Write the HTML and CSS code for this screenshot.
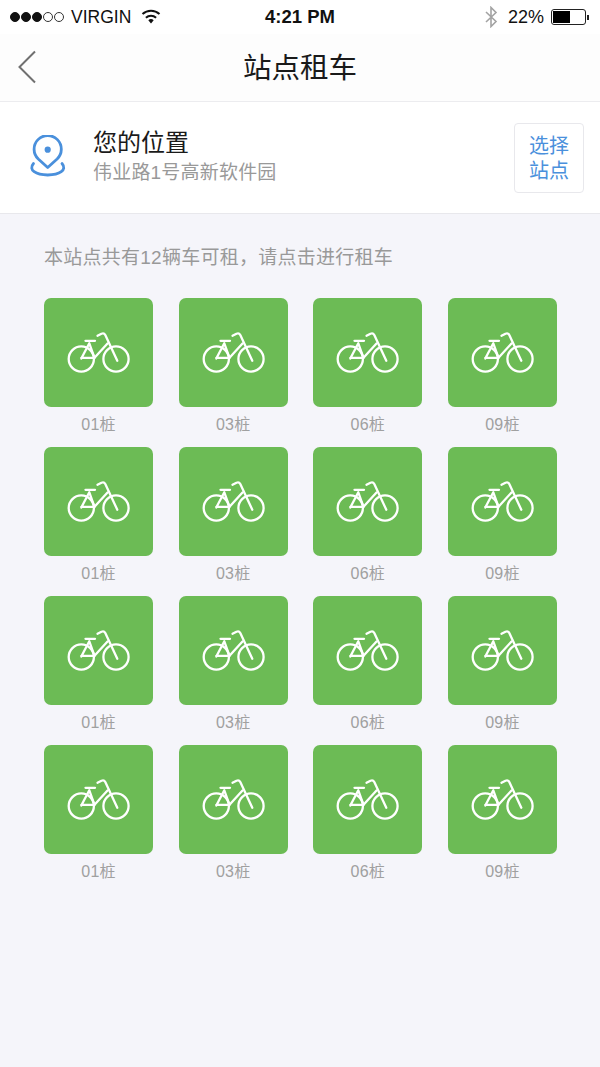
FILE: index.html
```html
<!DOCTYPE html>
<html lang="zh-CN">
<head>
    <meta charset="UTF-8">
    <meta name="viewport" content="width=device-width, initial-scale=1.0">
    <title>站点租车</title>
    <link rel="stylesheet" href="styles.css">
</head>
<body>
<svg class="defs" width="0" height="0">
    <symbol id="bike" viewBox="0 0 64 44">
        <g fill="none" stroke="#fff" stroke-width="2.300" stroke-linecap="round" stroke-linejoin="round">
            <circle cx="15.300" cy="28" r="12.600"/>
            <circle cx="50" cy="28" r="12.600"/>
            <path d="M31.500 4.800 35.500 2.700C37 2 38.500 2.500 39.300 4L51.300 29.700"/>
            <path d="M15.300 27.500 23.300 12.300 28.500 26.800H15.300"/>
            <path d="M28.500 26.800 41.500 12.500"/>
            <path d="M19.500 9.800H29"/>
        </g>
    </symbol>
</svg>

<div class="statusbar">
    <div class="status-left">
        <span class="signal"><i class="on"></i><i class="on"></i><i class="on"></i><i></i><i></i></span>
        <span class="carrier">VIRGIN</span>
        <svg class="wifi" width="20" height="15" viewBox="0 0 20 15">
            <path d="M10 14.500 7.300 11.300a4 4 0 0 1 5.400 0z" fill="#111"/>
            <path d="M4.900 8.700a7.500 7.500 0 0 1 10.200 0M1.500 5a12.600 12.600 0 0 1 17 0" fill="none" stroke="#111" stroke-width="2"/>
        </svg>
    </div>
    <div class="time">4:21 PM</div>
    <div class="status-right">
        <svg class="bt" width="14" height="22" viewBox="0 0 14 22">
            <path d="M2 6 12 15.500 7 20.500V1.500L12 6.500 2 16" fill="none" stroke="#a3a3a3" stroke-width="1.600"/>
        </svg>
        <span class="battery-text">22%</span>
        <span class="battery"><span class="battery-level"></span></span>
        <span class="battery-tip"></span>
    </div>
</div>

<div class="navbar">
    <svg class="back" width="20" height="34" viewBox="0 0 20 34">
        <path d="M18 1.500 2.500 17 18 32.500" fill="none" stroke="#707070" stroke-width="2"/>
    </svg>
    <h1>站点租车</h1>
</div>

<div class="location">
    <svg class="pin" width="38" height="42" viewBox="0 0 38 42">
        <g fill="none" stroke="#4a90dc" stroke-width="2.800" stroke-linecap="round" stroke-linejoin="round">
            <path d="M18.700 32.500 9.300 24A13.600 13.600 0 1 1 28.100 24Z"/>
            <path d="M4.500 28.500C-1 35 7 40 18.700 40S38.500 35 33 28.500"/>
        </g>
        <circle cx="18.700" cy="14.700" r="3.100" fill="#4a90dc"/>
    </svg>
    <div class="location-info">
        <div class="location-title">您的位置</div>
        <div class="location-addr">伟业路1号高新软件园</div>
    </div>
    <div class="pick-btn">选择<br>站点</div>
</div>

<div class="content">
    <p class="hint">本站点共有12辆车可租，请点击进行租车</p>
    <div class="grid">
        <div class="item"><div class="tile"><svg class="bike"><use href="#bike"/></svg></div><span>01桩</span></div>
        <div class="item"><div class="tile"><svg class="bike"><use href="#bike"/></svg></div><span>03桩</span></div>
        <div class="item"><div class="tile"><svg class="bike"><use href="#bike"/></svg></div><span>06桩</span></div>
        <div class="item"><div class="tile"><svg class="bike"><use href="#bike"/></svg></div><span>09桩</span></div>
        <div class="item"><div class="tile"><svg class="bike"><use href="#bike"/></svg></div><span>01桩</span></div>
        <div class="item"><div class="tile"><svg class="bike"><use href="#bike"/></svg></div><span>03桩</span></div>
        <div class="item"><div class="tile"><svg class="bike"><use href="#bike"/></svg></div><span>06桩</span></div>
        <div class="item"><div class="tile"><svg class="bike"><use href="#bike"/></svg></div><span>09桩</span></div>
        <div class="item"><div class="tile"><svg class="bike"><use href="#bike"/></svg></div><span>01桩</span></div>
        <div class="item"><div class="tile"><svg class="bike"><use href="#bike"/></svg></div><span>03桩</span></div>
        <div class="item"><div class="tile"><svg class="bike"><use href="#bike"/></svg></div><span>06桩</span></div>
        <div class="item"><div class="tile"><svg class="bike"><use href="#bike"/></svg></div><span>09桩</span></div>
        <div class="item"><div class="tile"><svg class="bike"><use href="#bike"/></svg></div><span>01桩</span></div>
        <div class="item"><div class="tile"><svg class="bike"><use href="#bike"/></svg></div><span>03桩</span></div>
        <div class="item"><div class="tile"><svg class="bike"><use href="#bike"/></svg></div><span>06桩</span></div>
        <div class="item"><div class="tile"><svg class="bike"><use href="#bike"/></svg></div><span>09桩</span></div>
    </div>
</div>
</body>
</html>
```

FILE: styles.css
```css
* { box-sizing: border-box; }
html, body { height: 100%; }
body {
    margin: 0; background: #f5f5fa; display: flex; flex-direction: column;
    font-family: "Liberation Sans", "Noto Sans CJK SC", sans-serif;
}
.defs { position: absolute; }

.statusbar {
    height: 34px; background: #fff; display: flex; align-items: center;
    justify-content: space-between; padding: 0 10px; position: relative; color: #111;
}
.status-left { display: flex; align-items: center; font-size: 17.500px; }
.signal { display: flex; gap: 1px; margin-right: 7px; }
.signal i { width: 10px; height: 10px; border-radius: 50%; border: 1px solid #333; }
.signal i.on { background: #111; border-color: #111; }
.wifi { margin-left: 10px; margin-top: -2px; }
.time { font-size: 18.500px; font-weight: bold; position: absolute; left: 0; right: 0; text-align: center; }
.status-right { display: flex; align-items: center; font-size: 18px; }
.bt { margin-right: 10px; }
.battery-text { margin-right: 7px; }
.battery {
    width: 35px; height: 16px; border: 1px solid #222; border-radius: 3px; padding: 1px; display: block;
}
.battery-level { display: block; width: 17px; height: 100%; background: #000; }
.battery-tip { width: 2px; height: 5px; background: #222; margin-left: 1px; margin-right: 1px; }

.navbar {
    height: 68px; background: #fdfdfd; border-bottom: 1px solid #ececef; display: flex;
    align-items: center; justify-content: center; position: relative;
}
.navbar h1 { margin: 0 0 4px; font-size: 28.500px; font-weight: normal; color: #1a1a1a; }
.back { position: absolute; left: 17px; top: 16px; }

.location {
    height: 112px; background: #fff; border-bottom: 1px solid #e8e8ec; display: flex;
    align-items: center; padding: 0 16px 0 29px;
}
.pin { margin-right: 27px; margin-top: -4px; flex: none; }
.location-info { flex: 1; margin-left: -1px; }
.location-title { font-size: 24px; color: #1a1a1a; line-height: 30px; }
.location-addr { font-size: 19px; letter-spacing: .2px; color: #999; line-height: 28px; margin-top: 1px; }
.pick-btn {
    width: 70px; height: 70px; border: 1px solid #e8e8ec; border-radius: 4px; color: #4a90dc;
    font-size: 20px; line-height: 24.500px; text-align: center; padding-top: 10px; margin-top: 1px;
}

.content { padding: 0 43px 0 44px; flex: 1; }
.hint { margin: 30px 0 0; font-size: 19px; letter-spacing: .25px; line-height: 28px; color: #999; }
.grid { display: grid; grid-template-columns: repeat(4, 109px); justify-content: space-between; row-gap: 8px; margin-top: 26px; }
.item { display: flex; flex-direction: column; align-items: center; height: 141px; }
.tile {
    width: 109px; height: 109px; background: #6cbb55; border-radius: 7px; display: flex;
    align-items: center; justify-content: center; flex: none;
}
.bike { width: 64px; height: 44px; margin-left: -1px; margin-top: 1px; }
.item span { font-size: 16px; letter-spacing: .2px; line-height: 24px; color: #a0a0a0; margin-top: 6px; }
```
